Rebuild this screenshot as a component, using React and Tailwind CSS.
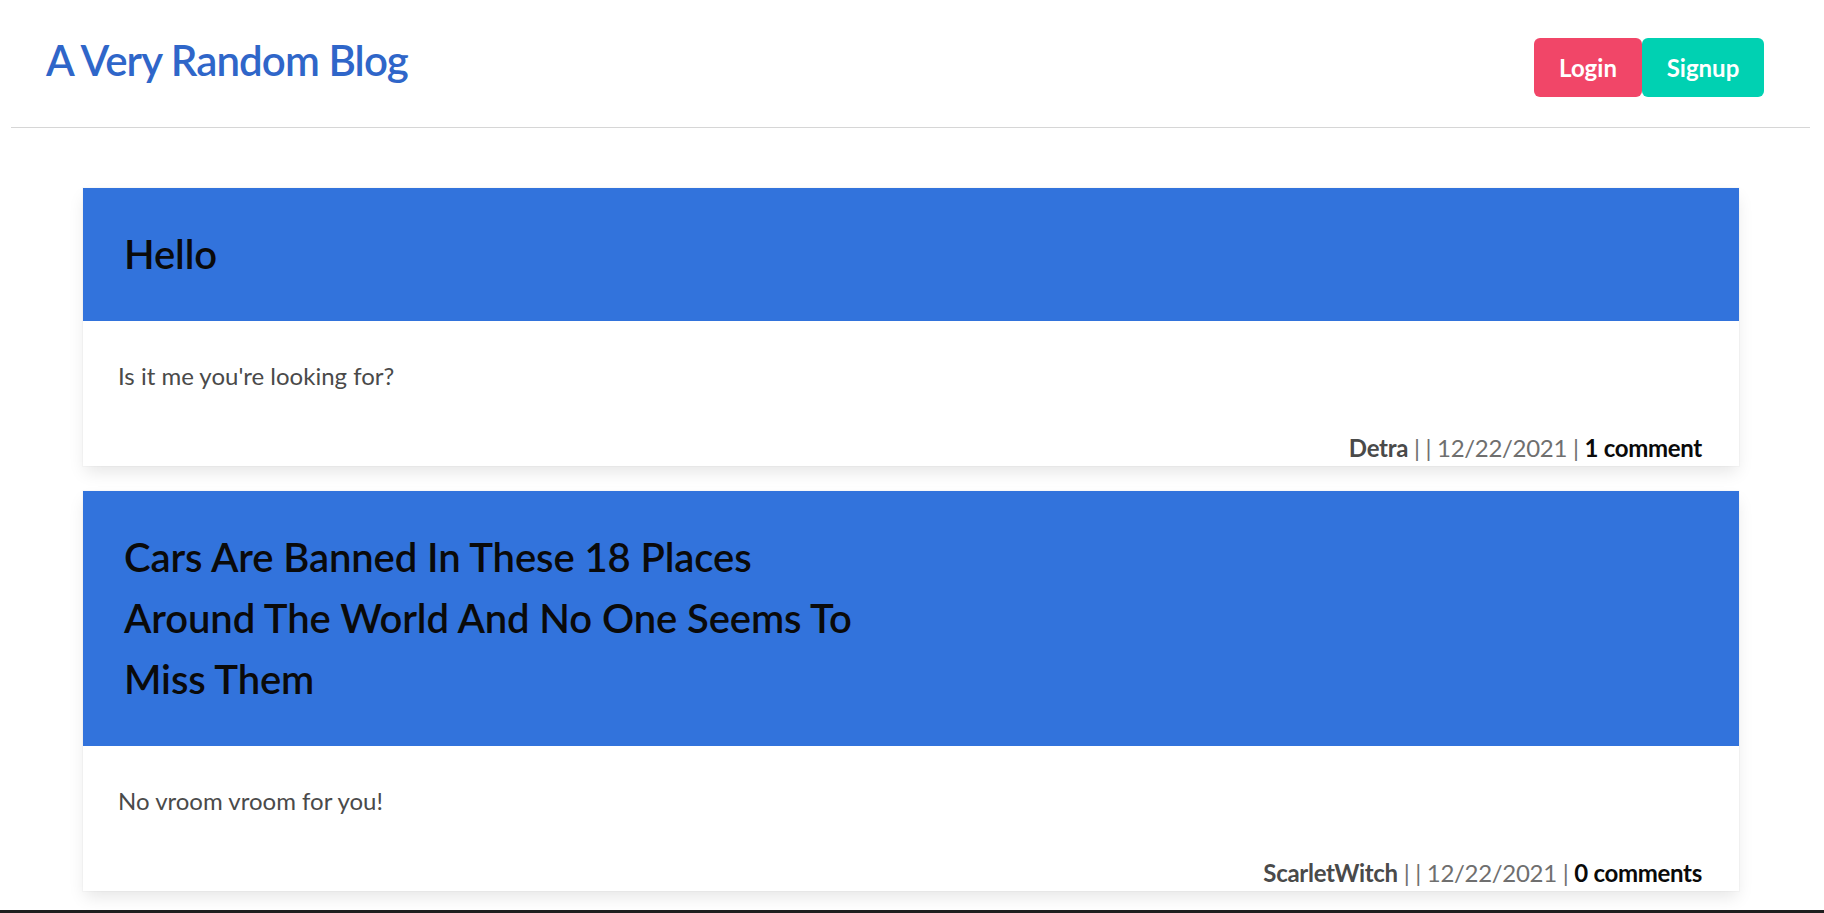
import React from 'react';

const posts = [
  {
    id: 1,
    title: 'Hello',
    body: "Is it me you're looking for?",
    author: 'Detra',
    date: '12/22/2021',
    comments: '1 comment',
  },
  {
    id: 2,
    title: 'Cars Are Banned In These 18 Places Around The World And No One Seems To Miss Them',
    body: 'No vroom vroom for you!',
    author: 'ScarletWitch',
    date: '12/22/2021',
    comments: '0 comments',
  },
];

function PostCard({ post }) {
  return (
    <div className="bg-white shadow-[0_8px_16px_-2px_rgba(10,10,10,0.1),0_0_0_1px_rgba(10,10,10,0.02)]">
      <div className="bg-[#3273dc] px-[41px] py-[36px]">
        <h2 className="max-w-[737px] text-[40px] leading-[61px] font-semibold tracking-[-0.1px] text-[#0a0a0a]">{post.title}</h2>
      </div>
      <div className="px-[35px] pt-[37px] text-[24px] leading-[36px] text-[#4a4a4a]">
        <p>{post.body}</p>
        <div className="mt-[36px] pr-[2px] text-right tracking-[-0.3px]">
          <span className="font-bold">{post.author}</span>
          <span className="text-[#6f6f6f]"> | | {post.date} | </span>
          <span className="font-bold text-[#0a0a0a]">{post.comments}</span>
        </div>
      </div>
    </div>
  );
}

export default function App() {
  return (
    <div className="min-h-[913px] bg-white font-['Lato','Open_Sans',sans-serif]">
      <header className="ml-[11px] mr-[14px] flex h-[128px] items-start justify-between border-b border-[#d6d6d6] pl-[35px] pr-[46px]">
        <h1 className="mt-[38px] text-[42px] leading-[44px] font-semibold tracking-[-0.9px] text-[#2f66c9]">A Very Random Blog</h1>
        <div className="mt-[38px] flex">
          <button className="h-[59px] w-[108px] rounded-[6px] bg-[#f14668] text-[24px] font-bold text-white">
            Login
          </button>
          <button className="h-[59px] w-[122px] rounded-[6px] bg-[#00d1b2] text-[24px] font-bold text-white">
            Signup
          </button>
        </div>
      </header>

      <main className="ml-[83px] mr-[85px] mt-[60px] flex flex-col gap-[25px]">
        {posts.map((post) => (
          <PostCard key={post.id} post={post} />
        ))}
      </main>

      <div className="fixed bottom-0 left-0 right-0 h-[3px] bg-[#1e1e1e]" />
    </div>
  );
}
